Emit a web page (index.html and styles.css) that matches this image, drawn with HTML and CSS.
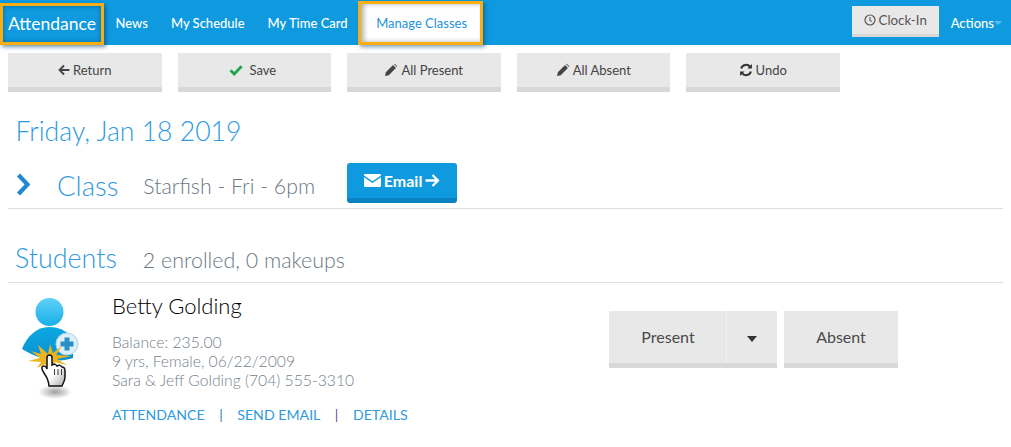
FILE: index.html
```html
<!DOCTYPE html>
<html lang="en">
<head>
<meta charset="utf-8">
<title>Attendance</title>
<link rel="stylesheet" href="styles.css">
</head>
<body>
<header class="nav">
  <a class="brand">Attendance</a>
  <a class="nav-link">News</a>
  <a class="nav-link">My Schedule</a>
  <a class="nav-link">My Time Card</a>
  <a class="nav-active">Manage Classes</a>
  <span class="nav-spacer"></span>
  <a class="clock"><svg class="ico-clock" viewBox="0 0 12 12"><circle cx="6" cy="6" r="5" fill="none" stroke="#555" stroke-width="1.2"/><path d="M6 3v3.400l2 1.200" fill="none" stroke="#555" stroke-width="1.100"/></svg>Clock-In</a>
  <a class="actions">Actions<span class="actions-caret"></span></a>
</header>
<div class="toolbar">
  <a class="tool"><svg class="ico" viewBox="0 0 12 12"><path d="M6 1.500 1.600 6 6 10.500M2 6h9.400" fill="none" stroke="#444" stroke-width="1.900"/></svg>Return</a>
  <a class="tool tool-save"><svg class="ico ico-check" viewBox="0 0 14 12"><path d="M1.500 6.200 5.200 10 12.600 2.200" fill="none" stroke="#1fa64f" stroke-width="2.800"/></svg>&nbsp;Save</a>
  <a class="tool"><svg class="ico ico-pencil" viewBox="0 0 13 13"><path d="M1 12l.7-3.400L8.400 1.900l2.700 2.700-6.700 6.700zM9.300 1l.7-.4 2.400 2.400-.5.700z" fill="#444"/></svg>All Present</a>
  <a class="tool"><svg class="ico ico-pencil" viewBox="0 0 13 13"><path d="M1 12l.7-3.400L8.400 1.900l2.700 2.700-6.700 6.700zM9.300 1l.7-.4 2.400 2.400-.5.700z" fill="#444"/></svg>All Absent</a>
  <a class="tool"><svg class="ico ico-pencil" viewBox="0 0 13 13"><path d="M2 5.200A4.700 4.700 0 0 1 10.300 3.600M11 7.800a4.700 4.700 0 0 1-8.300 1.600" fill="none" stroke="#333" stroke-width="1.900"/><path d="M12 1v4.200H7.800zM1 12V7.800h4.200z" fill="#333"/></svg>Undo</a>
</div>
<main class="content">
  <h1 class="date">Friday, Jan 18 2019</h1>
  <section class="class-row">
    <svg class="chevron" viewBox="0 0 15 23"><path d="M2.500 2 11.500 11.500 2.500 21" fill="none" stroke="#2389cf" stroke-width="4.200"/></svg>
    <h2 class="class-title">Class</h2>
    <span class="class-name">Starfish - Fri - 6pm</span>
    <a class="email"><svg class="ico-mail" viewBox="0 0 17 13"><path d="M0 1.200C0 .5.500 0 1.200 0h14.600c.7 0 1.200.5 1.200 1.200v.4L8.500 7.200 0 1.600zM0 3.300l8.500 5.600L17 3.300v8.500c0 .7-.5 1.200-1.200 1.200H1.200C.5 13 0 12.500 0 11.800z" fill="#fff"/></svg>Email<svg class="ico-arrow" viewBox="0 0 15 13"><path d="M7.500 1 13 6.500 7.500 12M13 6.500H.5" fill="none" stroke="#fff" stroke-width="2.300"/></svg></a>
  </section>
  <section class="students-head">
    <h2 class="students-title">Students</h2>
    <span class="students-count">2 enrolled, 0 makeups</span>
  </section>
  <article class="student">
    <div class="avatar">
      <svg viewBox="0 0 70 110" width="70" height="110">
        <defs>
          <linearGradient id="head" x1="0" y1="0" x2="0" y2="1"><stop offset="0" stop-color="#5fd2f8"/><stop offset="1" stop-color="#18aee6"/></linearGradient>
          <linearGradient id="body" x1="0" y1="0" x2="0" y2="1"><stop offset="0" stop-color="#0ba8e2"/><stop offset="1" stop-color="#0c8fd0"/></linearGradient>
          <linearGradient id="palm" x1="0" y1="0" x2="1" y2="1"><stop offset=".55" stop-color="#fff"/><stop offset="1" stop-color="#a8a8a8"/></linearGradient>
          <radialGradient id="shadow"><stop offset="0" stop-color="#000" stop-opacity=".38"/><stop offset="1" stop-color="#000" stop-opacity="0"/></radialGradient>
        </defs>
        <circle cx="27.500" cy="14" r="14" fill="url(#head)"/>
        <path d="M0 51C5 38 15 29 27 29c12 0 21 6 24 13v18C35 66 14 60 0 51z" fill="url(#body)"/>
        <circle cx="45" cy="46" r="11" fill="#dceff8" stroke="#a9d7ea"/>
        <path d="M42.500 39.500h5v4h4v5h-4v4h-5v-4h-4v-5h4z" fill="#2a8fc4"/>
        <ellipse cx="33" cy="94" rx="17" ry="7" fill="url(#shadow)"/>
        <path d="M16 47l10 9 2-10 3 9 9-7-6 9 15 1-14 3 10 6-12-3 3 9-7-7-4 8-2-8-8 4 4-6-13-1 12-3-9-7 10 3z" fill="#ecb51f"/>
        <path d="M25 80c-2-4-6-8-5-11 1-2 4-1 5 2V60c0-4 5-4 5 0v7c2-1 4-1 5 1 2-1 4-1 5 1 2 0 3 1 3 4v6c0 4-2 6-3 9H27c0-3-1-5-2-8z" fill="url(#palm)" stroke="#111" stroke-width="1.500"/>
        <path d="M32.500 71v6M36 71v6M39.500 71v6" stroke="#111" stroke-width=".8"/>
      </svg>
    </div>
    <div class="info">
      <h3 class="student-name">Betty Golding</h3>
      <p class="meta">Balance: 235.00</p>
      <p class="meta">9 yrs, Female, 06/22/2009</p>
      <p class="meta">Sara &amp; Jeff Golding (704) 555-3310</p>
      <nav class="links">
        <a>ATTENDANCE</a><span class="sep sep-blue">|</span><a>SEND EMAIL</a><span class="sep sep-purple">|</span><a>DETAILS</a>
      </nav>
    </div>
    <div class="marks">
      <div class="mark-split"><a class="mark mark-present">Present</a><a class="mark mark-caret"><span class="caret"></span></a></div>
      <a class="mark mark-absent">Absent</a>
    </div>
  </article>
</main>
</body>
</html>
```

FILE: styles.css
```css
* { box-sizing: border-box; }
html, body { margin: 0; padding: 0; }
body { width: 1011px; height: 447px; overflow: hidden; background: #fff; font-family: Lato, sans-serif; color: #444; }
h1, h2, h3, p { margin: 0; font-weight: 300; }

.nav { height: 45px; background: #0f9adf; display: flex; align-items: center; color: #fff; }
.brand { margin-top: 2px; width: 104px; height: 42px; border: 3px solid #f6ae12; box-shadow: 2px 2px 4px rgba(0,60,110,.55), inset 0 0 5px rgba(0,60,110,.5); font-size: 17.500px; display: flex; align-items: center; justify-content: center; }
.nav-link { font-size: 13px; font-weight: 500; margin: 0 11.500px; }
.nav-link:first-of-type { margin-left: 12px; }
.nav-active { margin-left: -1px; width: 125px; height: 44px; padding-left: 2px; background: #fff; color: #1e92dd; font-size: 13px; border: 3px solid #f6ae12; box-shadow: 2px 2px 4px rgba(0,60,110,.5), inset 3px 0 5px rgba(0,0,0,.3); display: flex; align-items: center; justify-content: center; }
.nav-spacer { flex: 1; }
.clock { width: 87px; height: 31px; margin-top: -2px; background: #e8e8e8; border-bottom: 3px solid #d8d8d8; color: #555; font-size: 13.300px; display: flex; align-items: center; justify-content: center; }
.ico-clock { width: 12px; height: 12px; margin-right: 3px; }
.actions { margin: 0 9px 0 12px; font-size: 13px; font-weight: 500; display: flex; align-items: center; }
.actions-caret { width: 0; height: 0; border: 4px solid transparent; border-top: 4px solid #63bbe9; border-bottom: 0; margin-top: 1px; }

.toolbar { display: flex; gap: 16px; padding: 8px 0 0 8px; }
.tool { width: 153.500px; height: 39px; background: #e8e8e8; border-bottom: 5px solid #d8d8d8; font-size: 13px; color: #444; display: flex; align-items: center; justify-content: center; }
.tool-save { padding-right: 3px; }
.ico { width: 12px; height: 12px; margin-right: 3px; }
.ico-check { width: 14px; }
.ico-pencil { width: 14px; height: 14px; }

.content { padding: 0 8px; }
.date { color: #2f9ade; font-size: 26.600px; line-height: 32px; margin: 23px 0 0 7.500px; }
.class-row { display: flex; align-items: center; height: 54px; margin-top: 8px; border-bottom: 1px solid #ddd; padding-left: 8px; width: 995px; }
.chevron { width: 15px; height: 23px; margin-top: 5px; }
.class-title { color: #2f9ade; font-size: 27.500px; margin: 8px 0 0 26px; line-height: 32px; }
.class-name { font-size: 21.300px; font-weight: 300; color: #6c7884; margin: 9px 0 0 25px; }
.email { margin: 3px 0 0 32px; width: 110px; height: 40px; background: #0f9adf; border-bottom: 5px solid #0a82c0; border-radius: 3px; color: #fff; font-size: 16px; font-weight: 700; display: flex; align-items: center; justify-content: center; }
.ico-mail { width: 17px; height: 13px; margin-right: 3px; }
.ico-arrow { width: 15px; height: 13px; margin-left: 3px; }

.students-head { display: flex; align-items: baseline; height: 74px; width: 995px; padding: 33px 0 0 7px; border-bottom: 1px solid #ddd; }
.students-title { color: #2f9ade; font-size: 26.900px; line-height: 32px; }
.students-count { font-size: 21.400px; font-weight: 300; color: #6c7884; margin-left: 26px; }

.student { display: flex; width: 995px; }
.avatar { width: 104px; padding: 15px 0 0 14px; }
.info { width: 497px; padding-top: 9px; }
.student-name { font-size: 22px; color: #000; line-height: 28px; margin-bottom: 13px; }
.meta { font-size: 15.700px; color: #76818c; line-height: 19px; }
.links { margin-top: 16px; font-size: 14.150px; color: #2f9ade; display: flex; }
.sep { margin: 0 14.500px 0 14.500px; }
.sep-blue { color: #1a7fb8; }
.sep-purple { color: #7b3f98; }

.marks { display: flex; gap: 7px; margin-top: 28px; height: 57px; }
.mark-split { display: flex; }
.mark { height: 57px; padding-bottom: 1px; background: #e8e8e8; border-bottom: 5px solid #d8d8d8; color: #4a4a4a; font-size: 16px; font-weight: 400; display: flex; align-items: center; justify-content: center; }
.mark-present { width: 118px; box-shadow: inset -1px 0 0 #f2f2f2; }
.mark-caret { width: 50px; padding: 3px 0 0; }
.mark-absent { width: 114px; }
.caret { width: 0; height: 0; border: 5.500px solid transparent; border-top: 6px solid #333; border-bottom: 0; }
```
